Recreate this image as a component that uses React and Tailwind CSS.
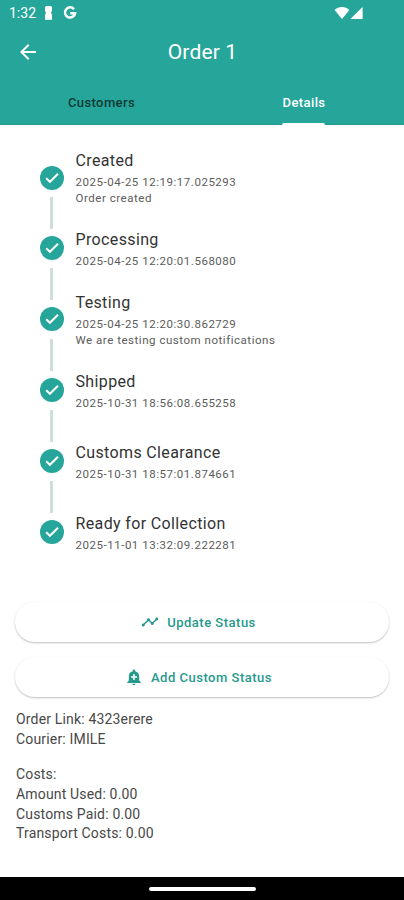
import { MdAddAlert, MdArrowBack, MdTimeline } from 'react-icons/md';

const steps = [
  { title: 'Created', date: '2025-04-25 12:19:17.025293', note: 'Order created' },
  { title: 'Processing', date: '2025-04-25 12:20:01.568080' },
  { title: 'Testing', date: '2025-04-25 12:20:30.862729', note: 'We are testing custom notifications' },
  { title: 'Shipped', date: '2025-10-31 18:56:08.655258' },
  { title: 'Customs Clearance', date: '2025-10-31 18:57:01.874661' },
  { title: 'Ready for Collection', date: '2025-11-01 13:32:09.222281' },
];

const costs = [
  { label: 'Amount Used', value: '0.00' },
  { label: 'Customs Paid', value: '0.00' },
  { label: 'Transport Costs', value: '0.00' },
];

const StatusBar = () => (
  <div className="flex h-[26px] items-center pl-[9px] pr-[41px] text-white">
    <span className="text-[14px] leading-none">1:32</span>
    <svg className="ml-[8px]" width="9" height="14" viewBox="0 0 9 14" fill="currentColor">
      <path d="M2.5 0h4A1.5 1.5 0 0 1 8 1.5v3.2L7 6.8l1 2v4.9H1V8.8l1-2-1-2.1V1.5A1.5 1.5 0 0 1 2.5 0z" />
    </svg>
    <svg className="ml-[10px]" width="14" height="14" viewBox="0 0 14 14" fill="none" stroke="currentColor" strokeWidth="2.5">
      <path d="M11 3.2A5.1 5.1 0 1 0 12.1 7.3H7.2" />
    </svg>
    <div className="ml-auto flex items-center">
      <svg width="16" height="13" viewBox="0 0 16 13" fill="currentColor">
        <path d="M8 12 0.6 3C2.6 1 5 0 8 0s5.4 1 7.4 3z" />
      </svg>
      <svg width="13" height="13" viewBox="0 0 13 13" fill="currentColor">
        <path d="M12.6 0v12H0.4z" />
      </svg>
    </div>
  </div>
);

const Header = () => (
  <header className="h-[125px] bg-[#26a69a]">
    <StatusBar />
    <div className="grid h-[51px] grid-cols-[56px_1fr_56px] items-center text-white">
      <button className="flex justify-center">
        <MdArrowBack size={24} />
      </button>
      <h1 className="pl-px pt-px text-center text-[21px] leading-none tracking-[0.15px]">Order 1</h1>
    </div>
    <nav className="grid h-[48px] grid-cols-2 border-b border-[#1f998d] text-[13px] font-medium">
      <button className="flex items-center justify-center pl-px pt-[5px] tracking-[0.4px] text-[#0b3a36]">Customers</button>
      <button className="flex flex-col items-center text-white">
        <span className="flex flex-1 items-center pl-[2px] pt-[6px] tracking-[0.4px]">Details</span>
        <span className="-mb-px h-[2px] w-[43px] shrink-0 rounded-t-full bg-white" />
      </button>
    </nav>
  </header>
);

const CheckMark = () => (
  <svg width="24" height="24" viewBox="0 0 24 24" fill="none" stroke="currentColor" strokeWidth="2">
    <path d="M6.2 12.3 9.9 15.8 18 7.8" />
  </svg>
);

const Step = ({ step, last }) => (
  <li className="flex h-[70.9px]">
    <div className="flex w-6 flex-col items-center pt-[23.5px]">
      <span className="flex size-6 shrink-0 items-center justify-center rounded-full bg-[#26a69a] text-white">
        <CheckMark />
      </span>
      {/* runs past the row to reach the next step */}
      {!last && <span className="mt-[7.5px] h-8 w-[2.5px] shrink-0 bg-[#cce0da]" />}
    </div>
    <div className="ml-3 flex flex-col justify-center whitespace-nowrap pt-px text-[11.5px] leading-4 tracking-[0.53px] text-[#5c5c5c]">
      <h2 className="mb-[2px] text-[16px] leading-[23px] tracking-[0.36px] text-[#333]">{step.title}</h2>
      <p>{step.date}</p>
      {step.note && <p>{step.note}</p>}
    </div>
  </li>
);

const PillButton = ({ icon: Icon, children }) => (
  <button className="flex h-10 w-full items-center justify-center gap-2 rounded-full bg-white pr-[7px] text-[13px] font-medium tracking-[0.5px] text-[#26998c] shadow-[0_1px_2px_rgba(0,0,0,0.25)]">
    <Icon size={18} />
    <span>{children}</span>
  </button>
);

export default function App() {
  return (
    <div className="flex h-[900px] w-[404px] flex-col overflow-hidden bg-white font-['Roboto',sans-serif]">
      <Header />
      <main className="flex-1">
        <ul className="pl-[39.5px] pt-[17px]">
          {steps.map((step, i) => (
            <Step key={step.title} step={step} last={i === steps.length - 1} />
          ))}
        </ul>
        <div className="mt-[35px] flex flex-col gap-[15px] px-[15px]">
          <PillButton icon={MdTimeline}>Update Status</PillButton>
          <PillButton icon={MdAddAlert}>Add Custom Status</PillButton>
        </div>
        <div className="mt-[12.5px] px-4 text-[14px] leading-[19.7px] tracking-[0.17px] text-[#484848]">
          <p>Order Link: 4323erere</p>
          <p>Courier: IMILE</p>
          <p className="mt-4">Costs:</p>
          {costs.map((cost) => (
            <p key={cost.label}>{cost.label}: {cost.value}</p>
          ))}
        </div>
      </main>
      <footer className="flex h-[23px] items-center justify-center bg-black">
        <span className="h-[4px] w-[107px] rounded-full bg-white" />
      </footer>
    </div>
  );
}
